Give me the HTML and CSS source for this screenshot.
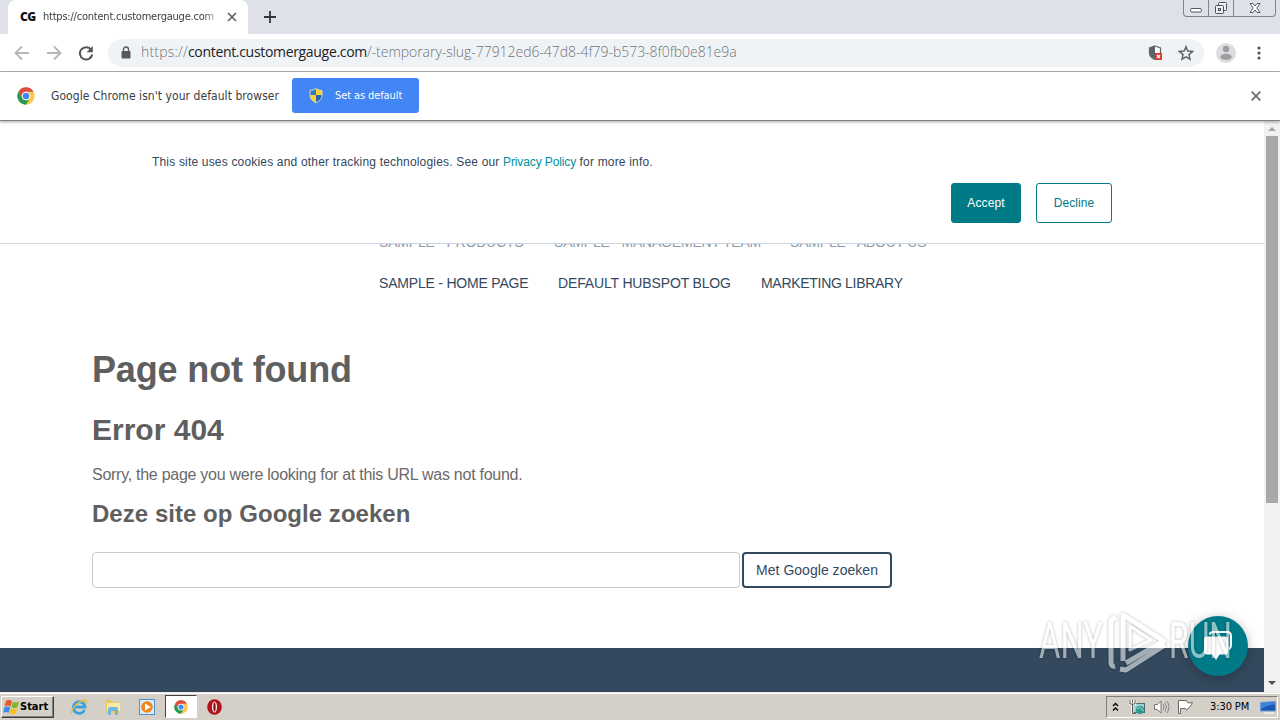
FILE: index.html
```html
<!DOCTYPE HTML>
<html lang="nl">
<head>
<meta charset="utf-8">
<title>Page not found</title>
<link rel="stylesheet" href="styles.css">
</head>
<body>
<svg width="0" height="0" class="defs">
	<symbol id="chrome" viewBox="0 0 48 48">
		<circle cx="24" cy="24" r="23" fill="#fbc94a"/>
		<path d="M4 12.500A23 23 0 0 1 44 12.500H24A11.500 11.500 0 0 0 14 29.700z" fill="#dd4b3e"/>
		<path d="M4 12.500A23 23 0 0 0 24 47L34 29.700A11.500 11.500 0 0 1 14 29.700z" fill="#229a55"/>
		<circle cx="24" cy="24" r="11.500" fill="#fff"/>
		<circle cx="24" cy="24" r="8.800" fill="#4285f4"/>
	</symbol>
</svg>

<!-- browser -->
<div class="tabs">
	<div class="tab">
		<b class="favicon">CG</b>
		<span class="tab-title">https://content.customergauge.com</span>
		<svg class="tab-close" width="10" height="10" viewBox="0 0 10 10"><path d="M1 1l8 8M9 1l-8 8" stroke="#5f6368" stroke-width="1.700"/></svg>
	</div>
	<svg class="tab-new" width="14" height="14" viewBox="0 0 14 14"><path d="M7 1v12M1 7h12" stroke="#33363b" stroke-width="1.800"/></svg>
	<div class="win">
		<span class="win-min"><svg width="14" height="16" viewBox="0 0 14 16"><rect x="1.500" y="8.500" width="11" height="3.500" rx="1.500" fill="#fff" stroke="#555b66"/></svg></span>
		<span class="win-max"><svg width="14" height="16" viewBox="0 0 14 16" fill="#eef0f4" stroke="#4a505b"><rect x="4.500" y="2.500" width="8" height="8" rx="1"/><rect x="1.500" y="5.500" width="8" height="8" rx="1"/><rect x="4.500" y="8.500" width="2" height="2"/></svg></span>
		<span class="win-close"><svg width="12" height="16" viewBox="0 0 12 16"><path d="M1 3.500h3l2 2.500 2-2.500h3L7.800 8l3.200 4.500H8L6 10l-2 2.500H1L4.200 8z" fill="#fff" stroke="#555b66"/></svg></span>
	</div>
</div>
<div class="toolbar">
	<svg class="nav-ico" width="16" height="16" viewBox="0 0 16 16"><path d="M15 8H2M8 1.500L1.500 8 8 14.500" fill="none" stroke="#b4b6b9" stroke-width="1.800"/></svg>
	<svg class="nav-ico" width="16" height="16" viewBox="0 0 16 16"><path d="M1 8h13M8 1.500L14.500 8 8 14.500" fill="none" stroke="#b4b6b9" stroke-width="1.800"/></svg>
	<svg class="nav-ico" width="16" height="16" viewBox="0 0 16 16"><path d="M13.200 4.800A6.200 6.200 0 1 0 14.200 9.500" fill="none" stroke="#505357" stroke-width="2"/><path d="M14.800 1v6.200H8.600z" fill="#505357"/></svg>
	<div class="omnibox">
		<svg class="lock" width="10" height="13" viewBox="0 0 10 13"><path d="M2.500 6V3.500a2.500 2.500 0 0 1 5 0V6" fill="none" stroke="#55585d" stroke-width="1.400"/><rect x="0.500" y="5" width="9" height="7.500" rx="1" fill="#55585d"/></svg>
		<span class="url"><i class="proto">https://</i><em>content.customergauge.com</em><i class="path">/-temporary-slug-77912ed6-47d8-4f79-b573-8f0fb0e81e9a</i></span>
		<svg class="shield" width="15" height="16" viewBox="0 0 15 16"><path d="M7 1l5.500 2v4.500C12.500 11 10 13.500 7 14.500 4 13.500 1.500 11 1.500 7.500V3z" fill="#fff" stroke="#5f6368" stroke-width="1.200"/><path d="M7 1v13.500C4 13.500 1.500 11 1.500 7.500V3z" fill="#5f6368"/><rect x="7" y="8" width="7" height="7" fill="#d93a2f"/><path d="M9 10l3 3M12 10l-3 3" stroke="#fff" stroke-width="1.200"/></svg>
		<svg class="star" width="16" height="16" viewBox="0 0 16 16"><path d="M8 1.800l1.800 4.300 4.700.4-3.500 3.100 1 4.600L8 11.800l-4 2.400 1-4.600-3.500-3.100 4.700-.4z" fill="none" stroke="#5f6368" stroke-width="1.500"/></svg>
	</div>
	<svg class="avatar" width="20" height="20" viewBox="0 0 20 20"><circle cx="10" cy="10" r="10" fill="#dcdddf"/><circle cx="10" cy="6" r="3.200" fill="#9b9da0"/><ellipse cx="10" cy="13.800" rx="5.800" ry="3" fill="#9b9da0"/></svg>
	<svg class="dots" width="4" height="14" viewBox="0 0 4 14" fill="#505357"><circle cx="2" cy="2" r="1.600"/><circle cx="2" cy="7" r="1.600"/><circle cx="2" cy="12" r="1.600"/></svg>
</div>
<div class="infobar">
	<svg width="18" height="18"><use href="#chrome"/></svg>
	<span class="info-text">Google Chrome isn't your default browser</span>
	<a class="info-btn">
		<svg width="14" height="15" viewBox="0 0 14 15"><path d="M7 .5C5 2 3 2.300 1 2.300V7h6z" fill="#3276c8"/><path d="M7 .5c2 1.500 4 1.800 6 1.800V7H7z" fill="#f6d332"/><path d="M1 7h6v7.500C4 13.500 1 11 1 7z" fill="#f6d332"/><path d="M13 7H7v7.500c3-1 6-3.500 6-7.500z" fill="#2a63ad"/><path d="M7 .5C5 2 3 2.300 1 2.300V7c0 4 3 6.500 6 7.500 3-1 6-3.500 6-7.500V2.300c-2 0-4-.3-6-1.800z" fill="none" stroke="#d9dcb8"/></svg>
		<span>Set as default</span>
	</a>
	<svg class="info-close" width="10" height="10" viewBox="0 0 10 10"><path d="M.7.7l8.600 8.600M9.300.7L.7 9.300" stroke="#6b6e72" stroke-width="1.900"/></svg>
</div>

<!-- page -->
<div class="view">
	<div class="page">
		<div class="cookie">
			<p>This site uses cookies and other tracking technologies. See our <a>Privacy Policy</a> for more info.</p>
			<div class="cookie-btns"><a class="accept">Accept</a><a class="decline">Decline</a></div>
		</div>
		<div class="menu">
			<ul class="under"><li class="m1">SAMPLE - PRODUCTS</li><li class="m2">SAMPLE - MANAGEMENT TEAM</li><li class="m3">SAMPLE - ABOUT US</li></ul>
			<ul><li class="m4">SAMPLE - HOME PAGE</li><li class="m5">DEFAULT HUBSPOT BLOG</li><li class="m6">MARKETING LIBRARY</li></ul>
		</div>
		<div class="content">
			<h1>Page not found</h1>
			<h2>Error 404</h2>
			<p>Sorry, the page you were looking for at this URL was not found.</p>
			<h3>Deze site op Google zoeken</h3>
			<form class="search"><input type="text"><button type="button">Met Google zoeken</button></form>
		</div>
		<div class="footer"></div>
		<div class="chat">
			<svg width="32" height="32" viewBox="0 0 32 32"><path d="M7.500 4.500q1-2.500 3.500-2.500h14q4 0 4 4v9q0 3-2 4" fill="none" stroke="#fff" stroke-width="2"/><path d="M5 6.500h18q3 0 3 3v12q0 3-3 3h-5.500L14 30l-3.500-5.500H5q-3 0-3-3v-12q0-3 3-3z" fill="#fff"/></svg>
		</div>
		<svg class="mark" width="200" height="70" viewBox="0 0 200 70">
			<text x="3" y="49" textLength="64" lengthAdjust="spacingAndGlyphs">ANY</text>
			<g fill="none" stroke-width="5" stroke-linejoin="round">
				<path d="M87 52V6l41 26-38 22"/>
				<path d="M80 8l-5 3v42q0 5 4 4"/>
				<path d="M84 60l6 1 39-25"/>
				<path d="M94 41V17l21 14z" stroke-width="3"/>
			</g>
			<text x="133" y="49" textLength="63" lengthAdjust="spacingAndGlyphs">RUN</text>
		</svg>
	</div>
	<div class="scroll"><i class="up"></i><div class="thumb"></div><i class="down"></i></div>
</div>

<!-- taskbar -->
<div class="taskbar">
	<div class="start">
		<svg width="17" height="16" viewBox="0 0 17 16"><path d="M3 2q3-2 6 0L7.500 7.500q-3-2-6 0z" fill="#e8572a"/><path d="M10 2.500q3 2 6 0L14.500 8q-3 2-6 0z" fill="#79b829"/><path d="M1.200 8.500q3-2 6 0L5.700 14q-3-2-5.500 0z" fill="#3d8fe0"/><path d="M8.200 9q3 2 6 0l-1.500 5.500q-3 2-6 0z" fill="#f9bf20"/></svg>
		<b>Start</b>
	</div>
	<svg class="t-ie" width="18" height="18" viewBox="0 0 18 18"><path d="M14.500 12A5.800 5.800 0 1 1 15 9H4" fill="none" stroke="#3ca0df" stroke-width="2.800"/><path d="M2 16C-1 13 8 3 15 2q3 0 1 3.500" fill="none" stroke="#e9bd43" stroke-width="1.300"/></svg>
	<svg class="t-ex" width="18" height="18" viewBox="0 0 18 18"><path d="M2 2h5l1 2h7v11H2z" fill="#e9c765"/><path d="M3 5h13v8H3z" fill="#f8e9a5"/><path d="M4 17v-6q0-2 2-2h6q2 0 2 2v6h-3v-4H7v4z" fill="#6cb8e2"/></svg>
	<svg class="t-wm" width="16" height="16" viewBox="0 0 16 16"><rect x=".5" y=".5" width="15" height="15" fill="#d9ebf9" stroke="#4d94cd"/><circle cx="8" cy="8" r="5.800" fill="#f08619"/><path d="M6 4.500L12 8l-6 3.500z" fill="#fff"/></svg>
	<div class="task-on"><svg width="14" height="14"><use href="#chrome"/></svg></div>
	<svg class="t-op" width="15" height="16" viewBox="0 0 15 16"><ellipse cx="7.500" cy="8" rx="7.300" ry="7.800" fill="#b3121b"/><ellipse cx="7.500" cy="8" rx="2.600" ry="5.500" fill="#f1e7e4"/><ellipse cx="7.500" cy="8" rx="1.100" ry="4.600" fill="#7a0c12"/></svg>
	<div class="tray">
		<svg class="chev" width="7" height="10" viewBox="0 0 7 10"><path d="M1 4l2.500-2.500L6 4M1 8.500L3.500 6 6 8.500" fill="none" stroke="#000" stroke-width="1.400"/></svg>
		<svg class="net" width="17" height="16" viewBox="0 0 17 16"><rect x="4.500" y="4.500" width="11" height="9" fill="#9ccfd0" stroke="#4b6970"/><path d="M1 1v4h5V1M3.500 1v2.500M3.500 5v10" fill="none" stroke="#fff" stroke-width="2.600"/><path d="M1 1v4h5V1M3.500 1v2.500M3.500 5v9.500h3" fill="none" stroke="#555"/><circle cx="11" cy="11" r="4" fill="#2d9a8c"/><path d="M8 10q3-3 5 0t1 2" fill="none" stroke="#9ee0be"/></svg>
		<svg class="vol" width="17" height="16" viewBox="0 0 17 16"><path d="M1.500 5.500h3L8 2v12l-3.500-3.500h-3z" fill="#fff" stroke="#777"/><path d="M10 5q2 3 0 6M12 3.500q3 4.500 0 9M14 2q4 6 0 12" fill="none" stroke="#888"/></svg>
		<svg class="flag" width="17" height="16" viewBox="0 0 17 16"><path d="M1.500 1.500v13h2v-5h5l1 1.500q3-2 5-5.500l1-2q-3 1-5 0l-1-2z" fill="#fff" stroke="#666"/></svg>
		<span class="time">3:30 PM</span>
		<svg class="desk" width="16" height="13" viewBox="0 0 16 13"><path d="M.5 1.500l15-1v9.500H.5z" fill="#1c57b4" stroke="#6f9bd4"/><path d="M1 2l14-1v2.500Q7 4 1 8z" fill="#3d86da"/><path d="M4 12h10" stroke="#eee" stroke-width="1.500"/></svg>
	</div>
</div>
</body>
</html>
```
FILE: styles.css
```css
* { box-sizing:border-box; }
body { margin:0; width:1280px; height:720px; overflow:hidden; background:#fff; font-family:"Liberation Sans",Arial,sans-serif;}
h1,h2,h3,p,ul { margin:0; padding:0;}
svg { display:block; flex:none;}
.defs { position:absolute;}

.tabs { height:34px; background:#dee1e9; display:flex; align-items:flex-start; padding-left:8px;}
.tab { width:240px; height:34px; background:#fff; border-radius:8px 8px 0 0; display:flex; align-items:center; padding-left:12px;}
.favicon { width:23px; font:800 12px/16px "Open Sans",sans-serif; color:#111; letter-spacing:-0.5px;}
.tab-title { width:178px; white-space:nowrap; font:11px/16px "DejaVu Sans Condensed","DejaVu Sans",sans-serif; color:#3a3d42; letter-spacing:-0.22px; -webkit-mask-image:linear-gradient(90deg,#000 160px,transparent 180px);}
.tab-close { margin-left:6px;}
.tab-new { margin:10px 0 0 15px;}
.win { margin-left:auto; margin-right:4px; width:93px; height:17px; display:flex; border:1px solid #7e838e; border-top:0; border-radius:0 0 4px 4px;}
.win span { display:flex; justify-content:center; border-left:1px solid #7e838e;}
.win .win-min { width:24px; border:0;}
.win-max { width:25px;}
.win-close { flex:1;}

.toolbar { height:38px; border-bottom:1px solid #b3b3b3; display:flex; align-items:center; padding-left:14px;}
.nav-ico { margin-right:16px;}
.omnibox { margin-left:-2px; width:1096px; height:28px; border-radius:14px; background:#f0f3f6; display:flex; align-items:center;}
.lock { margin-left:13px;}
.url { margin:-2px 0 0 10px; width:1007px; white-space:nowrap; font:14px/20px "Open Sans","Noto Sans",sans-serif; color:#6f7479; font-weight:300; letter-spacing:-0.04px;}
.url i { font-style:normal;}
.url .proto { letter-spacing:0.2px;}
.url em { font-style:normal; color:#202124; font-weight:400; letter-spacing:-0.32px;}
.star { margin-left:15px;}
.avatar { margin-left:12px;}
.dots { margin-left:21px;}

.infobar { position:relative; z-index:3; height:49px; background:#fff; border-bottom:1px solid #828282; box-shadow:0 1px 3px rgba(0,0,0,.35); display:flex; align-items:center; padding-left:17px;}
.info-text { margin-left:16px; width:241px; white-space:nowrap; font:12px/16px "DejaVu Sans Condensed","DejaVu Sans",sans-serif; color:#3a3d42; letter-spacing:0.06px;}
.info-btn { width:127px; height:35px; margin-top:-1px; border-radius:3px; background:#4285f4; color:#fff; display:flex; align-items:center; padding-left:17px; font:11px/16px "DejaVu Sans Condensed","DejaVu Sans",sans-serif; white-space:nowrap; letter-spacing:-0.1px;}
.info-btn span { margin-left:12px;}
.info-close { margin-left:832px;}

.view { height:571px; display:flex;}
.page { position:relative; width:1264px; height:571px; overflow:hidden; background:#fff;}
.cookie { position:absolute; z-index:2; left:0; top:0; width:1264px; height:123px; background:#fff; border-bottom:1px solid #cbd6e2; padding:32px 152px 0; font-size:12px; line-height:18px; color:#33475b;}
.cookie p { white-space:nowrap; letter-spacing:0.18px;}
.cookie p a { color:#0091ae; color:#00909c; letter-spacing:-0.12px;}
.cookie-btns { display:flex; justify-content:flex-end; margin-top:12px;}
.cookie-btns a { height:40px; line-height:38px; border:1px solid #007a87; border-radius:3px; text-align:center; letter-spacing:0.1px;}
.accept { width:70px; background:#007a87; color:#fff;}
.decline { width:76px; margin-left:15px; color:#007a87;}
.menu { padding:101px 0 0 379px;}
.menu ul { display:flex; list-style:none; height:41px;}
.menu li { font-size:14px; line-height:41px; color:#34495e; white-space:nowrap; letter-spacing:-0.2px;}
.menu .under li { color:#8f9aa6;}
.menu .m5 { letter-spacing:-0.15px;}
.menu .m6 { letter-spacing:-0.3px;}
.m1 { width:175px;} .m2 { width:236px;} .m4 { width:179px;} .m5 { width:203px;}
.content { padding:46px 0 0 92px; color:#5f5f5f;}
.content h1 { font-size:36px; line-height:40px; letter-spacing:-0.15px;}
.content h2 { font-size:30px; line-height:34px; margin-top:23px;}
.content p { font-size:16px; line-height:24px; margin-top:16px; letter-spacing:-0.27px; color:#6a6a6a;}
.content h3 { font-size:24px; line-height:28px; margin-top:13px; letter-spacing:0.04px;}
.search { display:flex; margin-top:24px;}
.search input { width:648px; height:36px; border:1px solid #ccc; border-radius:4px; background:#fff;}
.search button { width:150px; height:36px; margin-left:2px; padding:0; border:2px solid #34495e; border-radius:4px; background:#fff; color:#34495e; font:14px "Liberation Sans",Arial,sans-serif; letter-spacing:0.03px;}
.footer { margin-top:60px; height:44px; background:#34495e;}
.chat { position:absolute; left:1188px; top:495px; width:60px; height:60px; border-radius:50%; background:#007a87; box-shadow:0 2px 12px rgba(0,0,0,.25); display:flex; align-items:center; justify-content:center;}
.mark { position:absolute; left:1036px; top:488px; opacity:.55; filter:drop-shadow(0 0 1.5px rgba(0,0,0,.5));}
.mark text { font:400 50px Roboto,sans-serif; fill:#fff;}
.mark g { stroke:#fff;}
.scroll { width:16px; height:571px; background:#f1f1f1; display:flex; flex-direction:column; align-items:center;}
.scroll i { width:0; height:0; border:4px solid transparent; border-top:0; border-bottom:4px solid #a3a3a3; margin-top:6px;}
.thumb { width:12px; height:367px; background:#a8a8a8; margin-top:5px;}
.scroll .down { border-bottom:0; border-top:4px solid #505050; margin-top:auto; margin-bottom:7px;}

.taskbar { height:28px; background:#d4d0c8; border-top:1px solid #e9e7e2; box-shadow:inset 0 1px 0 #fff; display:flex; align-items:center;}
.start { width:53px; height:22px; margin:1px 0 0 1px; border:1px solid; border-color:#fff #404040 #404040 #fff; box-shadow:inset -1px -1px 0 #808080; display:flex; align-items:center; padding-left:1px;}
.start b { font:bold 11px/14px "DejaVu Sans Condensed","DejaVu Sans",sans-serif; color:#000; letter-spacing:0;}
.t-ie { margin-left:16px;}
.t-ex { margin-left:16px;}
.t-wm { margin-left:17px;}
.task-on { width:32px; height:23px; margin:0 0 0 10px; background:#fff; border:1px solid; border-color:#404040 #fff #fff #404040; display:flex; align-items:center; justify-content:center;}
.t-op { margin-left:10px;}
.tray { margin:1px 2px 0 auto; width:172px; height:22px; border:1px solid; border-color:#808080 #fff #fff #808080; display:flex; align-items:center;}
.chev { margin-left:5px;}
.net { margin-left:10px;}
.vol { margin-left:7px;}
.flag { margin-left:7px;}
.time { margin-left:16px; width:50px; white-space:nowrap; font:11px/14px "DejaVu Sans Condensed","DejaVu Sans",sans-serif; color:#000; letter-spacing:-0.1px;}
```
